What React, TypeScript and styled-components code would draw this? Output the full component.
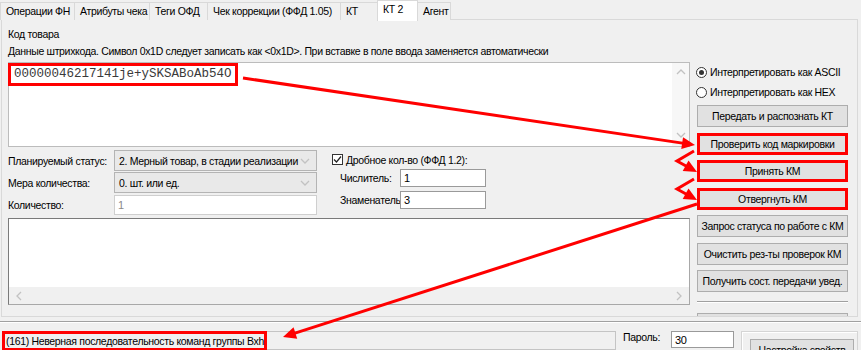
import React from "react";
import styled, { createGlobalStyle } from "styled-components";

const Global = createGlobalStyle`
  html, body { margin: 0; padding: 0; background: #f0f0f0; }
  body { font-family: "Liberation Sans", Arial, sans-serif; font-size: 10.5px; letter-spacing: -0.33px; color: #000; }
  * { box-sizing: border-box; }
`;

const Root = styled.div`
  position: relative;
  width: 861px;
  height: 350px;
  overflow: hidden;
  background: #f0f0f0;
  display: flex;
  flex-direction: column;
  & > * { flex: none; }
`;

const TabStrip = styled.div`
  display: flex;
  align-items: flex-end;
  height: 20px;
  position: relative;
  z-index: 2;
`;

const Tab = styled.div<{ $w: number; $active?: boolean }>`
  width: ${(p) => p.$w}px;
  height: ${(p) => (p.$active ? 21 : 18)}px;
  margin-bottom: ${(p) => (p.$active ? -1 : 0)}px;
  margin-right: -1px;
  padding-left: 5px;
  border: 1px solid #d9d9d9;
  border-bottom: none;
  background: ${(p) => (p.$active ? "#ffffff" : "#f0f0f0")};
  line-height: ${(p) => (p.$active ? 17 : 16)}px;
  white-space: nowrap;
  overflow: hidden;
`;

const Pane = styled.div`
  margin: -1px 3px 0 1px;
  height: 298px;
  border: 1px solid #d9d9d9;
  background: #f0f0f0;
  padding: 8px 6px 0 6px;
  overflow: hidden;
  display: flex;
  flex-direction: column;
  & > * { flex: none; }
`;

const Caption = styled.div<{ $gap?: number }>`
  line-height: 13px;
  height: 13px;
  margin-top: ${(p) => p.$gap ?? 0}px;
  white-space: nowrap;
`;

const Main = styled.div`
  display: grid;
  grid-template-columns: 682px 152px;
  column-gap: 6px;
  align-items: start;
  margin-top: 4px;
`;

const LeftCol = styled.div`
  display: flex;
  flex-direction: column;
`;

const RightCol = styled.div`
  display: flex;
  flex-direction: column;
`;

const CodeBox = styled.div`
  height: 85px;
  border: 1px solid #bcbcbc;
  background: #fff;
  display: flex;
`;

const CodeArea = styled.div`
  flex: 1;
`;

const CodeLine = styled.div`
  display: inline-block;
  margin: 0 0 0 -1px;
  height: 23px;
  border: 3px solid #ff0000;
  padding: 0 3px 0 3px;
  font-family: "Liberation Mono", "Courier New", monospace;
  font-size: 12.5px;
  letter-spacing: 0;
  line-height: 16px;
  color: #3a3a3a;
  white-space: nowrap;
`;

const VScroll = styled.div`
  width: 17px;
  background: #f7f7f7;
  display: flex;
  flex-direction: column;
  justify-content: space-between;
  align-items: center;
  padding: 5px 0 7px;
`;

const HScroll = styled.div`
  height: 17px;
  background: #f0f0f0;
  display: flex;
  justify-content: space-between;
  align-items: center;
  padding: 0 6px 0 6px;
`;

const Chevron = ({ dir }: { dir: "up" | "down" | "left" | "right" }) => {
  const d = {
    up: "M1 6 L5 2 L9 6",
    down: "M1 2 L5 6 L9 2",
    left: "M6 1 L2 5 L6 9",
    right: "M2 1 L6 5 L2 9",
  }[dir];
  const vertical = dir === "up" || dir === "down";
  return (
    <svg width={vertical ? 10 : 8} height={vertical ? 8 : 10} viewBox={vertical ? "0 0 10 8" : "0 0 8 10"}>
      <path d={d} fill="none" stroke="#c2c2c2" strokeWidth="1.3" />
    </svg>
  );
};

const FormArea = styled.div`
  display: flex;
  margin-top: 3px;
  height: 65px;
`;

const FormLeft = styled.div`
  display: grid;
  grid-template-columns: 106px 203px;
  grid-auto-rows: 21px;
  row-gap: 1px;
  align-items: center;
`;

const FormRight = styled.div`
  margin-left: 14px;
  display: flex;
  flex-direction: column;
`;

const Label = styled.div<{ $w?: number }>`
  white-space: nowrap;
  ${(p) => (p.$w ? `width: ${p.$w}px;` : "")}
  padding-left: ${(p) => (p.$w ? 9 : 0)}px;
`;

const Select = styled.div`
  height: 21px;
  border: 1px solid #b4b4b4;
  background: #e9e9e9;
  display: flex;
  align-items: center;
  justify-content: space-between;
  padding: 0 6px 0 4px;
  white-space: nowrap;
`;

const TextInput = styled.div<{ $w?: number; $h?: number; $dim?: boolean }>`
  height: ${(p) => p.$h ?? 20}px;
  ${(p) => (p.$w ? `width: ${p.$w}px;` : "")}
  border: 1px solid ${(p) => (p.$dim ? "#cfcfcf" : "#9a9a9a")};
  background: #fff;
  color: ${(p) => (p.$dim ? "#8a8a8a" : "#000")};
  display: flex;
  align-items: center;
  padding-left: 3px;
  font-size: 11px;
`;

const CheckRow = styled.div`
  height: 19px;
  display: flex;
  align-items: center;
  gap: 3px;
  padding-left: 1px;
`;

const CheckBox = styled.span`
  width: 11px;
  height: 11px;
  border: 1px solid #333;
  background: #fff;
  display: inline-flex;
  align-items: center;
  justify-content: center;
`;

const FieldRow = styled.div<{ $gap?: number }>`
  display: flex;
  align-items: center;
  margin-top: ${(p) => p.$gap ?? 0}px;
  height: 18px;
`;

const ListBox = styled.div`
  margin-top: 3px;
  height: 87px;
  border: 1px solid #7a7a7a;
  border-right-color: #a8a8a8;
  border-bottom-color: #a8a8a8;
  background: #fff;
  display: flex;
  flex-direction: column;
  justify-content: flex-end;
`;

const RadioRow = styled.div`
  height: 20px;
  display: flex;
  align-items: center;
  gap: 3px;
  white-space: nowrap;
`;

const RadioDot = styled.span<{ $on?: boolean }>`
  width: 11px;
  height: 11px;
  border-radius: 50%;
  border: 1px solid #333;
  background: #fff;
  display: inline-flex;
  align-items: center;
  justify-content: center;
  &::after {
    content: "";
    width: 5px;
    height: 5px;
    border-radius: 50%;
    background: ${(p) => (p.$on ? "#333" : "transparent")};
  }
`;

const Button = styled.div<{ $mark?: boolean; $gap?: number; $w?: number }>`
  width: ${(p) => p.$w ?? 151}px;
  height: 22px;
  flex: none;
  margin-left: 1px;
  margin-top: ${(p) => p.$gap ?? 5.5}px;
  border: ${(p) => (p.$mark ? "3px solid #ff0000" : "1px solid #adadad")};
  background: #e1e1e1;
  display: flex;
  align-items: center;
  justify-content: center;
  white-space: nowrap;
`;

const Separator = styled.div`
  margin: 9px 0 0 1px;
  width: 151px;
  height: 2px;
  border-top: 1px solid #a0a0a0;
  border-bottom: 1px solid #ffffff;
  flex: none;
`;

const StatusArea = styled.div`
  display: flex;
  flex-direction: column;
`;

const StatusSep = styled.div`
  margin-top: 4px;
  height: 2px;
  border-top: 1px solid #a0a0a0;
  border-bottom: 1px solid #ffffff;
`;

const StatusRow = styled.div`
  display: flex;
  align-items: flex-start;
  padding-left: 2px;
  margin-top: 8px;
`;

const StatusField = styled.div`
  width: 614px;
  height: 19px;
  border: 1px solid #c4c4c4;
  background: #f0f0f0;
  display: flex;
`;

const StatusMark = styled.div`
  margin: -1px 0 0 -1px;
  width: 265px;
  height: 20px;
  border: 3px solid #ff0000;
  padding-left: 1px;
  line-height: 14px;
  white-space: nowrap;
`;

const PassLabel = styled.div`
  width: 48px;
  margin-left: 7px;
  line-height: 13px;
`;

const GroupBox = styled.div`
  margin-left: 7px;
  width: 117px;
  height: 30px;
  border: 1px solid #d5d5d5;
  box-shadow: inset 1px 1px 0 #fff;
  padding: 7px 0 0 7px;
`;

const Overlay = styled.svg`
  position: absolute;
  left: 0;
  top: 0;
  pointer-events: none;
  z-index: 10;
`;

type Pt = [number, number];

const Arrow = ({ pts }: { pts: Pt[] }) => {
  const n = pts.length;
  const [ex, ey] = pts[n - 1];
  const [px, py] = pts[n - 2];
  const len = Math.hypot(ex - px, ey - py);
  const ux = (ex - px) / len;
  const uy = (ey - py) / len;
  const L = 13;
  const W = 6;
  const bx = ex - ux * L;
  const by = ey - uy * L;
  const line = [...pts.slice(0, n - 1), [bx + ux * 2, by + uy * 2] as Pt];
  const head = `${ex},${ey} ${bx - uy * W},${by + ux * W} ${bx + uy * W},${by - ux * W}`;
  return (
    <g>
      <polyline
        points={line.map((p) => p.join(",")).join(" ")}
        fill="none"
        stroke="#ff0000"
        strokeWidth="3"
        strokeLinejoin="miter"
      />
      <polygon points={head} fill="#ff0000" />
    </g>
  );
};

const tabs: { label: string; w: number; active?: boolean }[] = [
  { label: "Операции ФН", w: 75 },
  { label: "Атрибуты чека", w: 76 },
  { label: "Теги ОФД", w: 59 },
  { label: "Чек коррекции (ФФД 1.05)", w: 134 },
  { label: "КТ", w: 38 },
  { label: "КТ 2", w: 41, active: true },
  { label: "Агент", w: 34 },
];

export default function App() {
  return (
    <Root>
      <Global />
      <TabStrip>
        {tabs.map((t) => (
          <Tab key={t.label} $w={t.w} $active={t.active}>
            {t.label}
          </Tab>
        ))}
      </TabStrip>
      <Pane>
        <Caption>Код товара</Caption>
        <Caption $gap={4}>
          Данные штрихкода. Символ 0x1D следует записать как &lt;0x1D&gt;. При вставке в поле ввода заменяется
          автоматически
        </Caption>
        <Main>
          <LeftCol>
            <CodeBox>
              <CodeArea>
                <CodeLine>00000046217141je+ySKSABoAb54O</CodeLine>
              </CodeArea>
              <VScroll>
                <Chevron dir="up" />
                <Chevron dir="down" />
              </VScroll>
            </CodeBox>
            <FormArea>
              <FormLeft>
                <Label>Планируемый статус:</Label>
                <Select>
                  <span>2. Мерный товар, в стадии реализации</span>
                  <Chevron dir="down" />
                </Select>
                <Label>Мера количества:</Label>
                <Select>
                  <span>0. шт. или ед.</span>
                  <Chevron dir="down" />
                </Select>
                <Label>Количество:</Label>
                <TextInput $dim>1</TextInput>
              </FormLeft>
              <FormRight>
                <CheckRow>
                  <CheckBox>
                    <svg width="9" height="9" viewBox="0 0 9 9">
                      <path d="M1 4.5 L3.5 7 L8 1.5" fill="none" stroke="#222" strokeWidth="1.2" />
                    </svg>
                  </CheckBox>
                  <span>Дробное кол-во (ФФД 1.2):</span>
                </CheckRow>
                <FieldRow>
                  <Label $w={69}>Числитель:</Label>
                  <TextInput $w={86} $h={18}>
                    1
                  </TextInput>
                </FieldRow>
                <FieldRow $gap={4}>
                  <Label $w={69}>Знаменатель:</Label>
                  <TextInput $w={86} $h={18}>
                    3
                  </TextInput>
                </FieldRow>
              </FormRight>
            </FormArea>
            <ListBox>
              <HScroll>
                <Chevron dir="left" />
                <Chevron dir="right" />
              </HScroll>
            </ListBox>
          </LeftCol>
          <RightCol>
            <RadioRow>
              <RadioDot $on />
              <span>Интерпретировать как ASCII</span>
            </RadioRow>
            <RadioRow>
              <RadioDot />
              <span>Интерпретировать как HEX</span>
            </RadioRow>
            <Button $gap={3}>Передать и распознать КТ</Button>
            <Button $mark>Проверить код маркировки</Button>
            <Button $mark>Принять КМ</Button>
            <Button $mark>Отвергнуть КМ</Button>
            <Button>Запрос статуса по работе с КМ</Button>
            <Button>Очистить рез-ты проверок КМ</Button>
            <Button>Получить сост. передачи увед.</Button>
            <Separator />
            <Button $gap={10} />
          </RightCol>
        </Main>
      </Pane>
      <StatusArea>
        <StatusSep />
        <StatusRow>
          <StatusField>
            <StatusMark>(161) Неверная последовательность команд группы Bxh</StatusMark>
          </StatusField>
          <PassLabel>Пароль:</PassLabel>
          <TextInput $w={63} $h={17}>
            30
          </TextInput>
          <GroupBox>
            <Button $gap={0} $w={104}>
              Настройка свойств
            </Button>
          </GroupBox>
        </StatusRow>
      </StatusArea>
      <Overlay width="861" height="350" viewBox="0 0 861 350">
        <Arrow pts={[[243, 78], [695, 145]]} />
        <Arrow pts={[[694, 151], [677, 161], [697, 172]]} />
        <Arrow pts={[[694, 179], [677, 189], [697, 200]]} />
        <Arrow pts={[[697, 204], [283, 337]]} />
      </Overlay>
    </Root>
  );
}
